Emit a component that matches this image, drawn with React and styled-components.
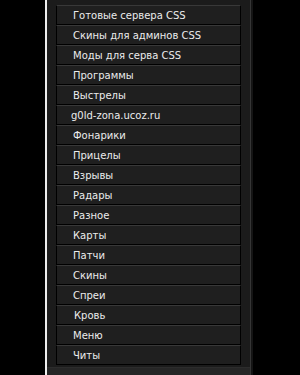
import styled, { createGlobalStyle } from 'styled-components'

const Global = createGlobalStyle`
  html, body {
    margin: 0;
    padding: 0;
    background: #000;
  }
`

const Page = styled.div`
  display: flex;
  height: 375px;
  overflow: hidden;
  padding-left: 45px;
`

const Panel = styled.div`
  display: flex;
  flex-direction: column;
  width: 203px;
  background: #1b1b1b;
  border-left: 2px solid #eeeeee;
  border-right: 1px solid #353535;
  box-shadow: 2px 0 0 #141414;
`

const Menu = styled.ul`
  list-style: none;
  margin: 0;
  padding: 5px 9px 2px 9px;
  display: flex;
  flex-direction: column;
`

const Item = styled.li`
  box-sizing: border-box;
  height: 20px;
  display: flex;
  align-items: center;
  padding-left: 16px;
  background: #1f1f1f;
  border: 1px solid #000;
  border-top-color: #383838;
  color: #ececec;
  font-family: 'DejaVu Sans', Verdana, sans-serif;
  font-size: 10px;
  white-space: nowrap;
  padding-left: ${({ $shift }) => 16 + ($shift || 0)}px;
`

const Footer = styled.div`
  flex: 1;
  background: #262626;
  border-top: 1px solid #2c2c2c;
`

const links = [
  ['Готовые сервера CSS'],
  ['Скины для админов CSS'],
  ['Моды для серва CSS'],
  ['Программы'],
  ['Выстрелы'],
  ['g0ld-zona.ucoz.ru', -2],
  ['Фонарики'],
  ['Прицелы'],
  ['Взрывы'],
  ['Радары'],
  ['Разное'],
  ['Карты'],
  ['Патчи'],
  ['Скины'],
  ['Спреи'],
  ['Кровь', 1],
  ['Меню'],
  ['Читы'],
]

export default function App() {
  return (
    <>
      <Global />
      <Page>
        <Panel>
          <Menu>
            {links.map(([label, shift]) => (
              <Item key={label} $shift={shift}>{label}</Item>
            ))}
          </Menu>
          <Footer />
        </Panel>
      </Page>
    </>
  )
}
